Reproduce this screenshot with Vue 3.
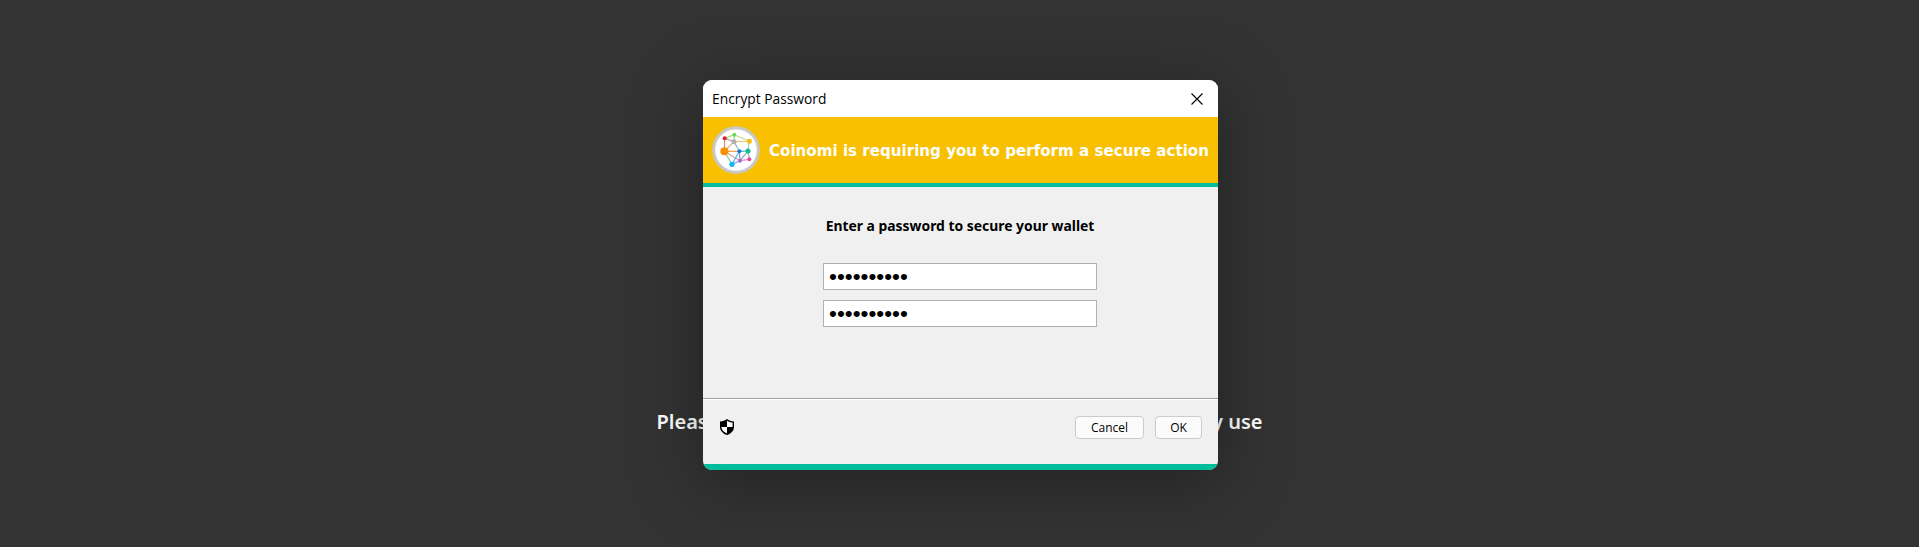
<script setup>
const lines = [
  ['88,205', '117,194', '#a5e07a'], ['117,194', '162,214', '#c9dc8a'], ['88,205', '116,215', '#c9a0a0'],
  ['88,205', '87,244', '#e88a6a'], ['116,215', '162,214', '#d8cf90'], ['116,215', '87,244', '#d8b070'],
  ['116,215', '132,244', '#8fb0d8'], ['117,194', '116,215', '#a8d8a0'], ['162,214', '158,243', '#9ad8a8'],
  ['87,244', '132,244', '#f0a040'], ['132,244', '158,243', '#40b0c0'], ['87,244', '134,272', '#d8a090'],
  ['87,244', '110,283', '#90c8a0'], ['132,244', '134,272', '#8a90d8'], ['132,244', '110,283', '#50b0e8'],
  ['158,243', '162,268', '#80c0b0'], ['134,272', '162,268', '#e090d0'], ['110,283', '134,272', '#80a0e0'],
  ['158,243', '134,272', '#80a0b0']
].map(([a, b, color]) => {
  const [x1, y1] = a.split(',')
  const [x2, y2] = b.split(',')
  return { x1, y1, x2, y2, color }
})
const nodes = [
  [88, 205, 6, '#e01830'], [117, 194, 6, '#70d860'], [116, 215, 7.5, '#b0b0b0'], [162, 214, 7.5, '#f8bc10'],
  [87, 244, 12, '#f89008'], [132, 244, 6, '#1878e0'], [158, 243, 7.5, '#10c090'], [134, 272, 6, '#a868d8'],
  [162, 268, 6, '#f040a0'], [110, 283, 8, '#10b8f0']
]
</script>

<template>
  <div class="page">
    <p class="notice"><span>Pleas</span><span>y use</span></p>
    <section class="dialog">
      <header class="titlebar">
        <span class="title">Encrypt Password</span>
        <svg class="close" width="12" height="12" viewBox="0 0 12 12"><path d="M.5.5l11 11M11.500.5l-11 11" stroke="#000" stroke-width="1.100" fill="none"/></svg>
      </header>
      <div class="banner">
        <svg class="logo" width="48" height="48" viewBox="50 168 144 144">
          <circle cx="122" cy="240" r="67" fill="#fff" stroke="#c8c8c8" stroke-width="9"/>
          <line v-for="(l, i) in lines" :key="i" :x1="l.x1" :y1="l.y1" :x2="l.x2" :y2="l.y2" :stroke="l.color" stroke-width="3.500"/>
          <circle v-for="(n, i) in nodes" :key="'n' + i" :cx="n[0]" :cy="n[1]" :r="n[2]" :fill="n[3]"/>
        </svg>
        <span class="banner-text">Coinomi is requiring you to perform a secure action</span>
      </div>
      <div class="body">
        <h2>Enter a password to secure your wallet</h2>
        <input class="field" type="password" value="1234567890" />
        <input class="field" type="password" value="1234567890" />
      </div>
      <footer class="footer">
        <svg class="shield" width="14" height="16" viewBox="0 0 14 16">
          <path d="M7 0C5 1.700 2.800 2.400 0 2.500V8c0 3.800 2.800 6.500 7 8 4.200-1.500 7-4.200 7-8V2.500C11.200 2.400 9 1.700 7 0z" fill="#000"/>
          <path d="M7 1.700V8h5.600V3.600C10.500 3.400 8.600 2.900 7 1.700zM7 8H1.400c.2 3 2.500 5.200 5.600 6.500z" fill="#fff"/>
        </svg>
        <div class="actions">
          <button class="btn cancel">Cancel</button>
          <button class="btn ok">OK</button>
        </div>
      </footer>
    </section>
  </div>
</template>

<style>
html, body { margin: 0; background: #333; }
</style>

<style scoped>
.page {
  position: relative;
  height: 547px;
  overflow: hidden;
  background: #333;
  display: flex;
  flex-direction: column;
  align-items: center;
}
.notice {
  width: 606px;
  margin: 410px 0 0;
  display: flex;
  justify-content: space-between;
  color: #fff;
  font: 600 20px/24px "Noto Sans", sans-serif;
}
.dialog {
  position: absolute;
  left: 703px;
  top: 80px;
  width: 515px;
  height: 390px;
  display: flex;
  flex-direction: column;
  background: #f0f0f0;
  border-radius: 9px;
  overflow: hidden;
  box-shadow: 0 12px 70px rgba(0, 0, 0, .35);
}
.titlebar {
  height: 37px;
  flex: none;
  box-sizing: border-box;
  padding: 0 15px 0 9px;
  display: flex;
  align-items: center;
  justify-content: space-between;
  background: #fff;
  color: #000;
  font: 400 13.800px "Open Sans", sans-serif;
}
.title { margin-top: -1px; }
.banner {
  height: 66px;
  flex: none;
  box-sizing: border-box;
  padding: 1px 0 0 9px;
  display: flex;
  align-items: center;
  gap: 9px;
  background: #f8c000;
}
.logo { margin-top: -1px; }
.banner-text {
  color: #fff;
  font: 700 15.100px "DejaVu Sans", sans-serif;
  white-space: nowrap;
}
.body {
  height: 216px;
  flex: none;
  box-sizing: border-box;
  border-top: 4px solid #00bfa0;
  border-bottom: 1px solid #a0a0a0;
  padding-top: 31px;
  padding-right: 1px;
  display: flex;
  flex-direction: column;
  align-items: center;
}
h2 {
  margin: 0 0 29px;
  color: #000;
  font: 700 13.900px/16px "Noto Sans", sans-serif;
}
.field {
  width: 274px;
  height: 27px;
  box-sizing: border-box;
  margin: 0 0 10px;
  padding: 1px 5px 0;
  border: 1px solid #b0b0b0;
  border-radius: 0;
  background: #fff;
  color: #000;
  font: 22.500px "Liberation Sans", sans-serif;
  outline: none;
}
.footer {
  flex: 1;
  box-sizing: border-box;
  border-top: 1px solid #fff;
  border-bottom: 6px solid #00bd9b;
  padding: 16px 16px 0 17px;
  display: flex;
  align-items: flex-start;
  justify-content: space-between;
}
.shield { margin-top: 3px; }
.actions { display: flex; gap: 11px; }
.btn {
  height: 23px;
  box-sizing: border-box;
  padding: 0;
  border: 1px solid #ccc;
  border-radius: 4px;
  background: #fbfbfb;
  color: #000;
  font: 400 12px "Open Sans", sans-serif;
}
.cancel { width: 69px; }
.ok { width: 47px; }
</style>
